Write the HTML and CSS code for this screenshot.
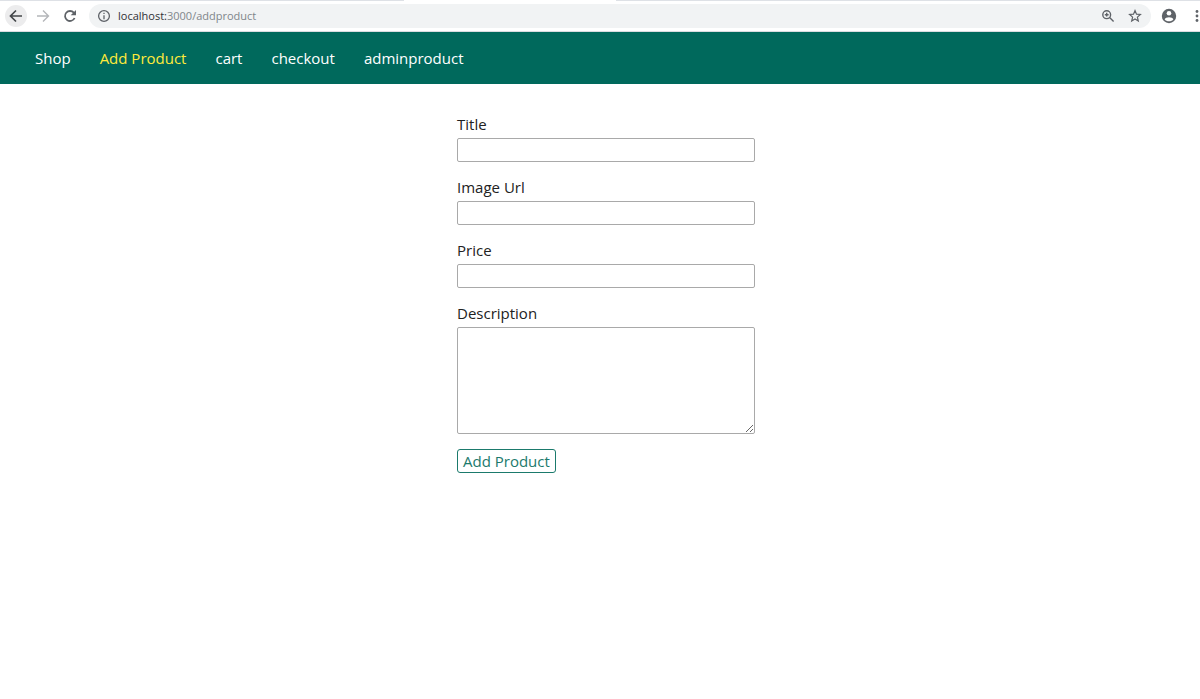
FILE: index.html
```html
<!DOCTYPE html>
<html lang="en">
<head>
<meta charset="utf-8">
<title>Add Product</title>
<link rel="stylesheet" href="styles.css">
</head>
<body>
<div class="browser">
  <div class="tab-strip"><span class="active-tab"></span></div>
  <div class="toolbar">
    <button class="tool back" aria-label="Back"><svg width="16" height="16" viewBox="0 0 16 16"><path d="M14 8H3M8 2.5L2.5 8L8 13.5"/></svg></button>
    <button class="tool forward" aria-label="Forward"><svg width="16" height="16" viewBox="0 0 16 16"><path d="M2 8H13M8 2.5L13.5 8L8 13.5"/></svg></button>
    <button class="tool reload" aria-label="Reload"><svg width="16" height="16" viewBox="0 0 16 16"><path d="M12.6 10A5 5 0 1 1 11.8 4.7L13 6"/><path class="solid" d="M14 2V7.3H8.7Z"/></svg></button>
    <div class="address">
      <svg class="info" width="14" height="14" viewBox="0 0 14 14"><circle cx="7" cy="7" r="5.4"/><path d="M7 6.3V10.2M7 3.8V5.1"/></svg>
      <span class="url">localhost:<span class="path">3000/addproduct</span></span>
      <button class="tool" aria-label="Zoom"><svg width="14" height="14" viewBox="0 0 14 14"><circle cx="5.7" cy="5.7" r="3.9"/><path d="M8.6 8.6L12.6 12.6M3.8 5.7H7.6M5.7 3.8V7.6"/></svg></button>
      <button class="tool" aria-label="Bookmark"><svg width="14" height="14" viewBox="0 0 14 14"><path class="star" d="M7 1.6L8.5 5.2L12.4 5.5L9.4 8.1L10.3 11.9L7 9.9L3.7 11.9L4.6 8.1L1.6 5.5L5.5 5.2Z"/></svg></button>
    </div>
    <button class="tool profile" aria-label="Profile"><svg width="16" height="16" viewBox="0 0 16 16"><circle class="solid" cx="8" cy="8" r="7.2"/><circle class="cut" cx="8" cy="5.3" r="2.3"/><path class="cut" d="M3.6 11.3C4.5 8.5 11.5 8.5 12.4 11.3C10.7 14 5.3 14 3.6 11.3Z"/></svg></button>
    <button class="tool more" aria-label="Menu"><svg width="4" height="16" viewBox="0 0 4 16"><g class="solid"><circle cx="2" cy="3.5" r="1.4"/><circle cx="2" cy="8" r="1.4"/><circle cx="2" cy="12.5" r="1.4"/></g></svg></button>
  </div>
</div>
<header class="main-header">
  <nav class="nav">
    <a href="#">Shop</a>
    <a href="#" class="active">Add Product</a>
    <a href="#">cart</a>
    <a href="#">checkout</a>
    <a href="#">adminproduct</a>
  </nav>
</header>
<main class="content">
  <form class="product-form">
    <div class="field"><label for="title">Title</label><input type="text" id="title"></div>
    <div class="field"><label for="image">Image Url</label><input type="text" id="image"></div>
    <div class="field"><label for="price">Price</label><input type="text" id="price"></div>
    <div class="field"><label for="description">Description</label><textarea id="description"></textarea></div>
    <button class="submit" type="button">Add Product</button>
  </form>
</main>
</body>
</html>
```
FILE: styles.css
```css
* { box-sizing: border-box; }
body { margin: 0; background: #fff; color: #222; font: 15px/20px "Open Sans", sans-serif; }
svg { display: block; fill: none; stroke: #5f6368; stroke-width: 1.4; }
.tab-strip { height: 1px; background: #dee1e6; }
.active-tab { display: block; width: 212px; height: 1px; margin-left: 404px; background: #fff; }
.toolbar { display: flex; align-items: center; height: 31px; border-bottom: 1px solid #dadce0; padding: 0 1px 0 5px; }
.tool { display: flex; align-items: center; justify-content: center; border: 0; padding: 0; background: none; }
.back, .forward, .reload { width: 22px; height: 22px; border-radius: 50%; margin-right: 5px; }
.back { background: #ececed; }
.back svg { stroke: #44474a; stroke-width: 1.7; }
.forward svg { stroke: #b4b6b9; }
.reload svg { stroke-width: 1.8; }
.solid { fill: #5f6368; stroke: none; }
.cut { fill: #fff; stroke: none; }
.star { stroke-width: 1.2; }
.address { display: flex; flex: 1; align-items: center; height: 24px; margin-left: 3px; padding: 0 9px 0 8px; gap: 13px; border-radius: 12px; background: #f1f3f4; }
.info { stroke-width: 1.3; }
.url { flex: 1; margin-left: -6px; color: #303134; font: 11px/16px "Open Sans", sans-serif; }
.path { color: #80868b; }
.profile { margin: 0 18px 0 10px; }
.main-header { padding: 16px 35px; background: #00695c; }
.nav { display: flex; gap: 29px; }
.nav a { color: #fff; text-decoration: none; }
.nav .active { color: #ffeb3b; }
.content { padding: 30px 0 30px 12px; }
.product-form { width: 298px; margin: 0 auto; }
.field { display: flex; flex-direction: column; gap: 4px; margin-bottom: 15px; }
.field input, .field textarea { width: 100%; height: 24px; margin: 0; padding: 2px 4px; border: 1px solid #a9a9a9; border-radius: 2px; background: #fff; font: inherit; }
.field textarea { height: 107px; }
.submit { height: 24px; padding: 0 5px; border: 1px solid #1b7a6c; border-radius: 3px; background: #fff; color: #1b7a6c; font: inherit; }
```
